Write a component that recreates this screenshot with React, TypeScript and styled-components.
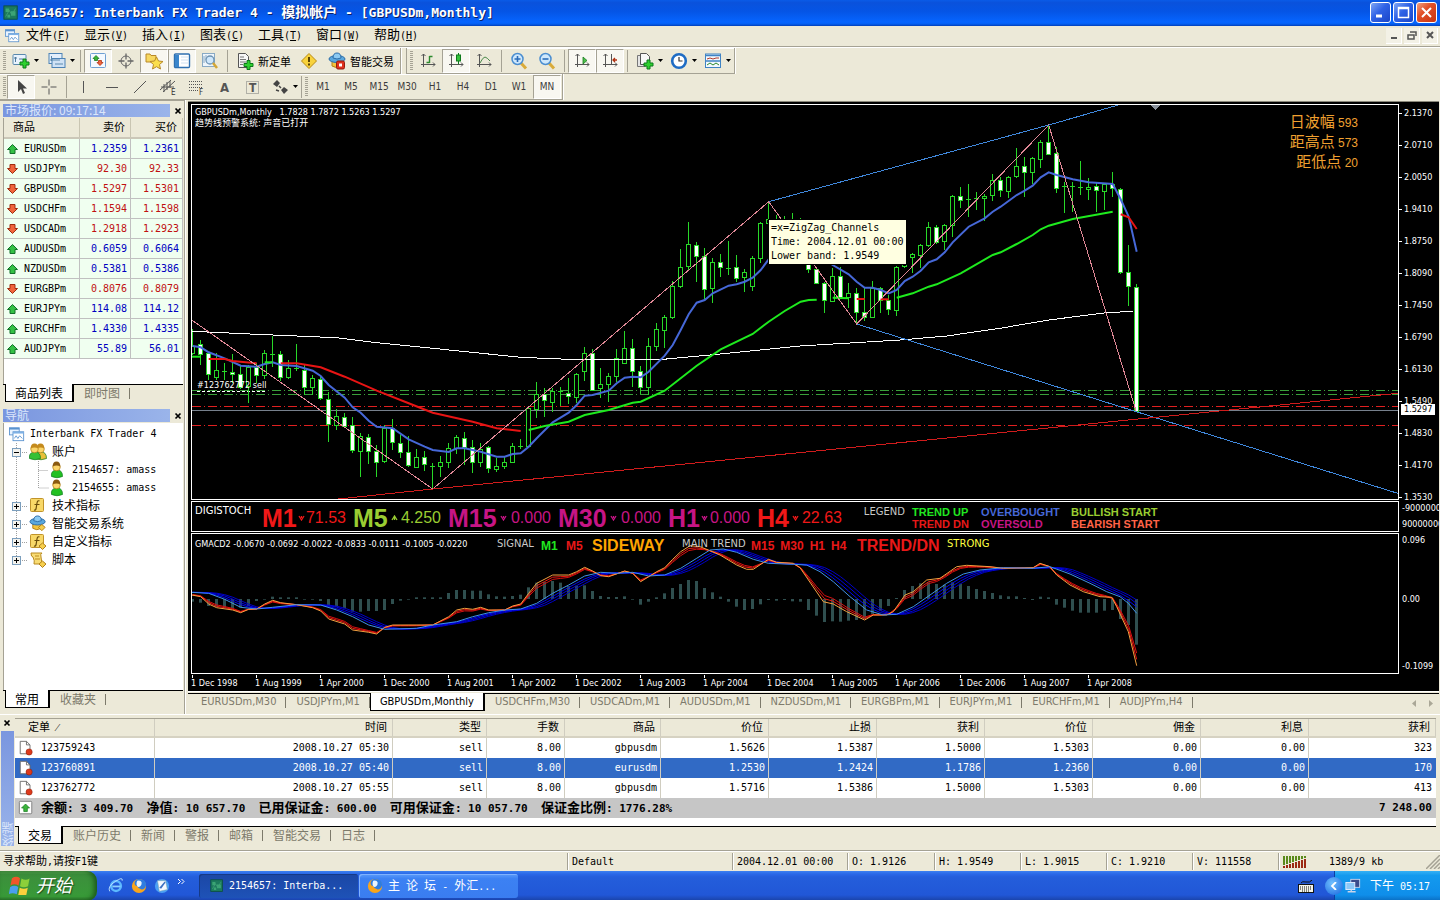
import React from "react";
import styled, { createGlobalStyle, css } from "styled-components";

const FACE = "#ece9d8";
const CJK = '"Noto Sans CJK SC"';
const MONO = `"DejaVu Sans Mono", ${CJK}, monospace`;
const UI = `"DejaVu Sans Condensed", ${CJK}, sans-serif`;
const WIDE = `"DejaVu Sans", ${CJK}, sans-serif`;
const ARIAL = '"Liberation Sans", Arial, sans-serif';

const GlobalStyle = createGlobalStyle`
  *, *::before, *::after { box-sizing: border-box; }
  body { margin: 0; background: ${FACE}; color: #000; font: 10px/14px ${MONO}; }
  button, input { font: inherit; color: inherit; }
  button { border: 0; padding: 0; margin: 0; background: none; text-align: left; white-space: nowrap; }
  ul { list-style: none; margin: 0; padding: 0; }
  svg { display: block; flex: none; }
`;

/* ---------- mixed Latin / Chinese text ---------- */

const Han = styled.span<{ $size: number }>`
  font-family: ${CJK}, sans-serif;
  font-size: ${(p) => p.$size}px;
  line-height: 1;
`;

const Mixed = ({ text, size = 12 }: { text: string; size?: number }) => (
  <>
    {text.split(/([\u4e00-\u9fff]+)/).map((part, i) =>
      i % 2 ? <Han key={i} $size={size}>{part}</Han> : part
    )}
  </>
);

/* ---------- frame ---------- */

const Desktop = styled.div`
  min-height: 100vh;
  display: flex;
  flex-direction: column;
`;

const TitleBar = styled.header`
  height: 26px;
  display: flex;
  align-items: center;
  gap: 4px;
  padding: 0 3px 1px 3px;
  background: linear-gradient(#0a5be8 0, #0a52dc 10%, #0555e6 45%, #0665ff 85%, #0560f2 92%, #023fb8 100%);
`;

const TitleText = styled.h1`
  flex: 1;
  margin: 0;
  font: bold 13px/20px ${MONO};
  color: #fff;
  text-shadow: 1px 1px #0a1f66;
  white-space: pre;
`;

const CaptionButtons = styled.div`
  display: flex;
  gap: 2px;
`;

const CaptionButton = styled.button<{ $close?: boolean }>`
  width: 21px;
  height: 21px;
  display: grid;
  place-items: center;
  border: 1px solid #fff;
  border-radius: 3px;
  background: ${(p) =>
    p.$close
      ? "linear-gradient(135deg, #f0a080, #e25028 40%, #c83410)"
      : "linear-gradient(135deg, #7fa6f5, #2f62e6 45%, #1a45c8)"};
`;

const MenuBar = styled.nav`
  height: 22px;
  display: flex;
  align-items: center;
  padding: 0 2px 2px 5px;
  border-bottom: 1px solid #fff;
  box-shadow: inset 0 -1px #a5a294;
`;

const MenuItems = styled.div`
  flex: 1;
  display: flex;
  padding-left: 6px;
`;

const MenuItem = styled.button`
  width: 58px;
  line-height: 18px;
  u { text-underline-offset: 1px; }
`;

const MdiButton = styled.button`
  width: 16px;
  height: 16px;
  margin-left: 2px;
  display: grid;
  place-items: center;
  background: #f3f1e6;
  border-right: 1px solid #fff;
  border-bottom: 1px solid #fff;
`;

/* ---------- toolbars ---------- */

const ToolRow = styled.div`
  display: flex;
  height: 26px;
`;

const ToolBand = styled.div`
  display: flex;
  align-items: center;
  height: 26px;
  padding: 0 1px 0 3px;
  border-right: 1px solid #a5a294;
  border-bottom: 1px solid #a5a294;
  box-shadow: inset 0 1px #fff, 1px 0 #fff;
  margin-right: 5px;
  & + & { border-left: 1px solid #a5a294; }
`;

const Grip = styled.span`
  width: 3px;
  height: 19px;
  margin-right: 1px;
  background: repeating-linear-gradient(#a5a294 0 1px, ${FACE} 1px 2px);
`;

const ToolButton = styled.button<{ $width?: number; $pressed?: boolean }>`
  width: ${(p) => p.$width ?? 28}px;
  height: 24px;
  display: flex;
  align-items: center;
  justify-content: ${(p) => (p.$width ? "flex-start" : "center")};
  gap: 4px;
  padding-left: ${(p) => (p.$width ? 5 : 0)}px;
  font-family: ${UI};
  color: #3c3c3c;
  ${(p) =>
    p.$pressed &&
    css`
      background: #f8f7f1;
      border: 1px solid #a5a294;
      border-right-color: #fff;
      border-bottom-color: #fff;
    `}
`;

const ToolSep = styled.span`
  width: 1px;
  height: 22px;
  margin: 0 3px;
  background: #a5a294;
`;

const ToolLabel = styled.span`
  font: 11px/14px ${CJK}, sans-serif;
  color: #000;
`;

const Caret = () => (
  <svg width="5" height="3"><path d="M0 0h5L2.500 3z" fill="#000" /></svg>
);

/* ---------- work area ---------- */

const Work = styled.main`
  flex: 1;
  display: flex;
  min-height: 0;
`;

const Side = styled.aside`
  width: 185px;
  margin-right: 3px;
  padding: 3px 1px 6px 3px;
  display: flex;
  flex-direction: column;
  border-top: 1px solid #a5a294;
  border-right: 1px solid #a5a294;
  box-shadow: 1px 0 #fff;
`;

const SidePanel = styled.section<{ $grow?: boolean }>`
  display: flex;
  flex-direction: column;
  ${(p) => p.$grow && "flex: 1;"}
  & + & { margin-top: 7px; }
`;

const PanelCaption = styled.h2`
  height: 13px;
  margin: 0 0 1px;
  display: flex;
  align-items: center;
  justify-content: space-between;
  font: 12px/13px ${CJK}, sans-serif;
  color: #dbe6fb;
`;

const PanelTitle = styled.span`
  width: 167px;
  height: 13px;
  padding-left: 2px;
  line-height: 11px;
  background: linear-gradient(90deg, #7a96df, #9ab4ea);
`;

const CloseX = styled.button`
  width: 8px;
  height: 8px;
  margin-right: 1px;
`;

const PanelBody = styled.div<{ $height?: number }>`
  background: #fff;
  border-left: 1px solid #a5a294;
  ${(p) => (p.$height ? `height: ${p.$height}px;` : "flex: 1; padding-top: 2px;")}
`;

const Quotes = styled.table`
  width: 100%;
  border-collapse: separate;
  border-spacing: 0;
  table-layout: fixed;
  th, td { height: 20px; padding: 0 3px; font-weight: normal; text-align: right; line-height: 14px; }
  th { height: 21px; padding-right: 6px; background: ${FACE}; border-bottom: 2px solid #cbc7b8; box-shadow: inset -1px 0 #c9c5b2; font-size: 11px; }
  td { background: #f0fff0; border-bottom: 1px solid #c0c0c0; border-right: 1px solid #c0c0c0; }
  th:first-child { text-align: left; padding-left: 9px; }
  td:first-child { text-align: left; }
`;

const Price = styled.td<{ $up: boolean }>`
  color: ${(p) => (p.$up ? "#0000c0" : "#c01010")};
`;

const Symbol = styled.span`
  display: flex;
  align-items: center;
  gap: 5px;
`;

const Tabs = styled.div<{ $inset?: number }>`
  display: flex;
  height: 18px;
  padding-left: ${(p) => p.$inset ?? 2}px;
  border-top: 1px solid #000;
`;

const Tab = styled.button<{ $active?: boolean; $latin?: boolean }>`
  height: 18px;
  margin-top: -1px;
  padding: 0 10px;
  font: ${(p) => (p.$latin ? `11px/18px ${UI}` : `12px/18px ${CJK}, sans-serif`)};
  color: #7d7a6b;
  background: linear-gradient(#7d7a6b, #7d7a6b) right 0 center / 1px 11px no-repeat;
  ${(p) =>
    p.$active &&
    css`
      padding: 0 9px;
      color: #000;
      background: #fff;
      border: 1px solid #000;
      border-top: 0;
      border-right-width: 2px;
    `}
`;

const TreeRow = styled.li`
  display: flex;
  align-items: center;
  height: 18px;
  white-space: pre;
`;

const TreeText = styled.span`
  padding-left: 5px;
`;

/* ---------- chart window ---------- */

const ChartColumn = styled.section`
  flex: 1;
  min-width: 0;
  display: flex;
  flex-direction: column;
  margin: 1px 1px 0 0;
  border-top: 1px solid #8a887a;
`;

const ChartWindow = styled.div`
  flex: 1;
  display: flex;
  flex-direction: column;
  gap: 1px;
  padding: 2px 0 0 3px;
  background: #000;
  color: #fff;
  font-family: ${UI};
  font-size: 9px;
  border-bottom: 1px solid #fff;
  overflow: hidden;
`;

const PaneRow = styled.div<{ $height?: number }>`
  display: grid;
  grid-template-columns: minmax(0, 1fr) 40px;
  ${(p) => (p.$height ? `height: ${p.$height}px;` : "flex: 1;")}
`;

const Pane = styled.div`
  position: relative;
  border: 1px solid #fff;
  overflow: hidden;
`;

const Plot = styled.svg`
  position: absolute;
  inset: 0;
  width: 100%;
  height: 100%;
`;

const Axis = styled.div<{ $rows?: string }>`
  position: relative;
  display: grid;
  grid-template-rows: ${(p) => p.$rows ?? "none"};
  align-content: start;
`;

const AxisLabel = styled.span`
  line-height: 14px;
  padding-left: 3px;
`;

const PriceLabel = styled(AxisLabel)`
  line-height: 18px;
  padding-left: 5px;
  background: linear-gradient(#fff, #fff) 0 9px / 3px 1px no-repeat;
`;

const PriceTag = styled.span`
  position: absolute;
  left: 2px;
  top: 300px;
  width: 34px;
  padding-left: 3px;
  background: #fff;
  color: #000;
  line-height: 11px;
`;

const PaneHeading = styled.div`
  position: relative;
  padding: 2px 3px;
  line-height: 11px;
  white-space: pre;
`;

const Ranges = styled.div`
  position: absolute;
  right: 40px;
  top: 8px;
  text-align: right;
  font: 12px/20px ${ARIAL};
  color: #f0a030;
`;

const Tooltip = styled.div`
  position: absolute;
  left: 576px;
  top: 114px;
  padding: 1px 3px 1px 2px;
  background: #ffffe1;
  border: 1px solid #000;
  color: #000;
  font: 10px/14px ${MONO};
  white-space: pre;
`;

const Readout = styled.div`
  position: relative;
  display: flex;
  gap: 7px;
  padding: 3px 3px;
  height: 29px;
  white-space: pre;
`;

const Small = styled.span<{ $width?: number; $color?: string; $end?: boolean; $narrow?: boolean }>`
  flex: none;
  line-height: ${(p) => (p.$end || p.$narrow || p.$color ? 14 : 12)}px;
  font-family: ${(p) => (p.$narrow ? UI : WIDE)};
  font-size: ${(p) => (p.$narrow ? 9 : 10)}px;
  color: ${(p) => p.$color ?? "#fff"};
  ${(p) => p.$width && `width: ${p.$width}px;`}
  ${(p) => p.$end && "text-align: right;"}
`;

const Gauge = styled.span<{ $width: number; $color: string }>`
  flex: none;
  width: ${(p) => p.$width}px;
  height: 26px;
  display: flex;
  align-items: center;
  justify-content: space-between;
  font: 16px/26px ${ARIAL};
  color: ${(p) => p.$color};
  b { font-size: 25px; }
`;

const Legend = styled.div`
  display: grid;
  grid-template-columns: 62px 83px auto;
  grid-auto-rows: 12px;
  column-gap: 7px;
  font: bold 11px/14px ${ARIAL};
`;

const LegendItem = styled.span<{ $color: string }>`
  color: ${(p) => p.$color};
`;

const Tint = styled.span<{ $color: string; $size?: number; $width: number }>`
  flex: none;
  width: ${(p) => p.$width}px;
  display: flex;
  gap: 6px;
  color: ${(p) => p.$color};
  font: bold ${(p) => p.$size ?? 12}px/18px ${ARIAL};
`;

const DateAxis = styled.div`
  display: flex;
  height: 16px;
  overflow: hidden;
`;

const DateLabel = styled.span`
  flex: none;
  width: 64px;
  line-height: 16px;
  background: linear-gradient(#fff, #fff) 1px 0 / 1px 3px no-repeat;
  white-space: nowrap;
`;

const ChartTabs = styled.div`
  display: flex;
  align-items: center;
  justify-content: space-between;
  height: 21px;
  padding-bottom: 2px;
  margin-top: 1px;
  border-top: 1px solid #000;
  & > ${Tabs} { flex: 1; padding-left: 3px; border-top: 0; }
`;

const Scrollers = styled.span`
  display: flex;
  gap: 13px;
  margin-right: 6px;
`;

/* ---------- terminal ---------- */

const Terminal = styled.section`
  display: flex;
  height: 136px;
  border-top: 1px solid #fff;
  padding: 3px 4px 0 1px;
`;

const Strip = styled.div`
  width: 14px;
  padding: 1px 1px 0 0;
  display: flex;
  flex-direction: column;
  align-items: center;
  gap: 4px;
`;

const StripTitle = styled.h2`
  width: 13px;
  flex: none;
  height: 115px;
  margin: 0;
  writing-mode: vertical-rl;
  transform: rotate(180deg);
  font: 12px/13px ${CJK}, sans-serif;
  color: #dbe6fb;
  background: linear-gradient(#9ab4ea, #7a96df);
`;

const TerminalBody = styled.div`
  flex: 1;
  min-width: 0;
`;

const TradeSheet = styled.div`
  background: #fff;
  border-top: 1px solid #a5a294;
  height: 108px;
`;

const Trades = styled.table`
  width: 100%;
  table-layout: fixed;
  border-collapse: separate;
  border-spacing: 0;
  th, td { height: 20px; padding: 0 3px; text-align: right; line-height: 14px; border-right: 1px solid #d0cdc0; }
  th { height: 19px; font-weight: normal; background: ${FACE}; border-bottom: 2px solid #d6d2c2; padding-right: 5px; font-size: 11px; }
  th:first-child { text-align: left; padding-left: 13px; }
  td:first-child { text-align: left; }
  td:last-child { border-right: 0; padding-right: 4px; }
`;

const TradeLine = styled.tr<{ $selected?: boolean }>`
  ${(p) => p.$selected && "background: #316ac5; color: #fff;"}
`;

const Summary = styled.tr`
  background: #c6c6c6;
  font-size: 11px;
  font-weight: bold;
  white-space: pre;
`;

const SummaryCell = styled.td`
  && { border-right: 0; }
`;

const IconText = styled.span`
  display: flex;
  align-items: center;
  gap: 7px;
`;

/* ---------- status bar & taskbar ---------- */

const StatusBar = styled.footer`
  display: flex;
  height: 21px;
  padding: 2px 0 1px;
  border-top: 1px solid #a5a294;
  box-shadow: inset 0 1px #fff;
`;

const StatusCell = styled.span<{ $width?: number }>`
  ${(p) => (p.$width ? `width: ${p.$width}px; padding-left: 4px;` : "flex: 1; padding-left: 3px;")}
  line-height: 18px;
  display: flex;
  align-items: center;
  & + & { border-left: 1px solid #a5a294; box-shadow: inset 1px 0 #fff; }
`;

const TrafficText = styled.span`
  flex: 1;
  padding-left: 22px;
`;

const TaskBar = styled.footer`
  display: flex;
  align-items: center;
  height: 30px;
  background: linear-gradient(#3c81f0 0, #2a68e8 10%, #245edb 20%, #2157d7 80%, #1941a5 100%);
  color: #fff;
`;

const StartButton = styled.button`
  width: 97px;
  height: 30px;
  display: flex;
  align-items: center;
  gap: 5px;
  padding: 0 0 4px 9px;
  border-radius: 0 10px 10px 0;
  background: linear-gradient(#5eac56 0, #3c8f3c 12%, #3a943a 50%, #389a38 85%, #2a6e2a 100%);
  box-shadow: inset -3px 0 5px #1c5a1c;
  font: italic 18px/26px ${CJK}, sans-serif;
  text-shadow: 1px 1px 1px #1d4d1d;
`;

const QuickLaunch = styled.div`
  width: 102px;
  display: flex;
  align-items: center;
  gap: 7px;
  padding-left: 11px;
`;

const TaskButton = styled.button<{ $active?: boolean }>`
  width: 159px;
  height: 24px;
  margin-right: 1px;
  display: flex;
  align-items: center;
  gap: 5px;
  padding-left: ${(p) => (p.$active ? 11 : 8)}px;
  border-radius: 3px;
  background: ${(p) => (p.$active ? "linear-gradient(#1b47a5, #1e52b7)" : "linear-gradient(#5a9bfa, #3c81f3 20%, #3a7df0)")};
  box-shadow: inset 1px 1px ${(p) => (p.$active ? "#163a86" : "#7fb2ff")};
`;

const TrayLead = styled.span`
  margin-left: auto;
  width: 36px;
`;

const Tray = styled.div`
  width: 106px;
  height: 30px;
  display: flex;
  align-items: center;
  gap: 2px;
  background: linear-gradient(#35b1f5 0, #139aee 15%, #0f8eea 80%, #0a6cc0 100%);
  border-left: 1px solid #0c3fa0;
`;

const Clock = styled.time`
  padding-left: 7px;
`;

const TrayToggle = styled.button`
  width: 18px;
  height: 18px;
  margin-left: -10px;
  display: grid;
  place-items: center;
  border-radius: 9px;
  background: radial-gradient(circle at 40% 35%, #6fc0ff, #1763dd);
`;

/* ---------- icons ---------- */

const Plus = ({ x, y }: { x: number; y: number }) => (
  <path
    transform={`translate(${x} ${y})`}
    d="M3.500 .5h3v3h3v3h-3v3h-3v-3h-3v-3h3z"
    fill="#2fd02f"
    stroke="#0b7a1b"
  />
);

const axes = <path d="M4.500 2v13M2 12.500h14M2.500 4l2-2 2 2M14 10.500l2 2-2 2" fill="none" stroke="#555" />;

const ufo = (
  <g>
    <path d="M4 8v6q4 3 9 0V8z" fill="#f3c33c" stroke="#b4821a" />
    <ellipse cx="9" cy="7" rx="8" ry="3.500" fill="#5aa7dd" stroke="#2b6ca8" />
    <path d="M5 6q0-5 4-5t4 5q-4 2-8 0z" fill="#8ccaf2" stroke="#2b6ca8" />
  </g>
);

const goldBox = (
  <g>
    <rect x="1.500" y="1.500" width="13" height="13" rx="1" fill="#f8d868" stroke="#c0932a" />
    <path d="M10.500 4q-2-1-2.500 2l-1 6q-.5 1.500-2 1M5.500 7.500h5" fill="none" stroke="#6b4d0a" strokeWidth="1.200" />
  </g>
);

const goldGem = <path d="M13.500 10l3.500 3-3.500 3.500-3.500-3.500z" fill="#f6cf4e" stroke="#b4821a" />;

const person = (x: number, hair: string, body: string) => (
  <g transform={`translate(${x} 1)`}>
    <path d="M.5 14.500q-1-6 5-6.500t6 6.500q-5.500 2.500-11 0z" fill={body} stroke="#0c7a1b" strokeWidth=".7" />
    <circle cx="5.500" cy="5" r="3.800" fill="#fbd56a" stroke="#b07c12" strokeWidth=".7" />
    <path d="M1.700 4.500q0-5 3.800-5t3.800 5q-3.800-2-7.600 0z" fill={hair} />
  </g>
);

const ICONS: Record<string, React.ReactNode> = {
  app: (
    <>
      <rect x="1" y="1" width="15" height="15" fill="#1c7a5c" stroke="#0b4f3e" />
      <path d="M3 4h4v4H3zM9 7h5v5H9zM5 11h3v3H5z" fill="#3aa574" />
      <path d="M3 13l4-7 3 5 4-7" fill="none" stroke="#3f9f78" />
    </>
  ),
  charts: (
    <>
      <rect x=".5" y="2" width="11" height="8" fill="#e8f3ff" stroke="#5a93cf" />
      <path d="M.5 3h11" stroke="#5a93cf" strokeWidth="2" />
      <rect x="4.500" y="6.500" width="12" height="10" fill="#fff" stroke="#5a93cf" />
      <path d="M4.500 7.500h12" stroke="#7eb1e5" strokeWidth="2" />
      <path d="M6 14l2-3 2 3 2-3 3 3" fill="none" stroke="#5a93cf" />
    </>
  ),
  newChart: (
    <>
      <rect x="1" y="2.500" width="13" height="10" rx="1" fill="#e9f3fd" stroke="#5a89ad" />
      <path d="M3.500 5v5M2 6h3M7 7h4" stroke="#4f7a9c" />
      <Plus x={7.500} y={6.500} />
    </>
  ),
  profiles: (
    <>
      <rect x="1" y="1.500" width="13" height="10" fill="#e3effb" stroke="#4d83b5" />
      <rect x="4" y="6.500" width="13" height="9" fill="#cfe2f5" stroke="#4d83b5" />
      <path d="M3.500 4v5M2 8h10M7 12h8" stroke="#5a89ad" />
    </>
  ),
  market: (
    <>
      <rect x="1.500" y="1.500" width="15" height="14" rx="1" fill="#f4f9ff" stroke="#6fa0d3" />
      <path d="M7 3.500l3 3H8.500v2h-3v-2H4z" fill="#35b435" stroke="#1a7a1f" strokeWidth=".8" />
      <path d="M11 13.500l3-3h-1.500v-2h-3v2H8z" fill="#f0643c" stroke="#b03010" strokeWidth=".8" />
    </>
  ),
  target: (
    <g fill="none" stroke="#666">
      <circle cx="9" cy="9" r="5" />
      <path d="M9 1.500v6M9 10.500v6M1.500 9h6M10.500 9h6" strokeWidth="1.300" />
    </g>
  ),
  favorites: (
    <>
      <path d="M1 2h4l1 1.500h5V10H1z" fill="#f7d860" stroke="#b8892a" />
      <path d="M11.500 5l2 4 4.500.5-3.500 3 1 4.500-4-2.300-4 2.300 1-4.500-3.500-3 4.500-.5z" fill="#fbdf4c" stroke="#b8892a" />
    </>
  ),
  terminal: (
    <>
      <rect x="1.500" y="2" width="15" height="13.500" rx="1" fill="#fff" stroke="#2f70b0" strokeWidth="1.400" />
      <path d="M2 3h4v12H2z" fill="#3a86cc" />
      <path d="M8 5h7M8 8h7M8 11h7" stroke="#cfe0f0" />
    </>
  ),
  tester: (
    <>
      <rect x="1.500" y="1.500" width="12" height="13" fill="#eef5fb" stroke="#88a9c4" />
      <path d="M3 4v7M5 3v5" stroke="#88a9c4" />
      <circle cx="9" cy="8" r="4" fill="#cfe7fb" stroke="#6d93b3" strokeWidth="1.300" />
      <path d="M12 11l4 5" stroke="#d4a634" strokeWidth="2.500" />
    </>
  ),
  newOrder: (
    <>
      <path d="M2.500 1.500h7l3 3v11h-10z" fill="#f6f6f6" stroke="#555" />
      <path d="M4 5h4M4 7.500h6M4 10h6M4 12.500h3" stroke="#777" />
      <Plus x={7.500} y={8} />
    </>
  ),
  metaEditor: (
    <>
      <path d="M9 1.500l7.500 7.500L9 16.500 1.500 9z" fill="#f8d23c" stroke="#b98a14" />
      <path d="M9 5v5M9 11.500v2" stroke="#5a4304" strokeWidth="2" />
    </>
  ),
  experts: (
    <>
      {ufo}
      <rect x="8.500" y="9" width="8" height="8" rx="1.500" fill="#e0301c" stroke="#941a0c" />
      <path d="M11 11.500h3v3h-3z" fill="#fff" />
    </>
  ),
  bars: (
    <>
      {axes}
      <path d="M10.500 4v7M10.500 4.500h3M7.500 10.500h3" stroke="#2c8a2c" strokeWidth="1.400" fill="none" />
    </>
  ),
  candles: (
    <>
      {axes}
      <path d="M11.500 1v11" stroke="#0e7a1c" />
      <rect x="9.500" y="3" width="4" height="6" fill="#34c23c" stroke="#0e7a1c" />
    </>
  ),
  line: (
    <>
      {axes}
      <path d="M5 11q3-6 5-6 2 .5 5 4" fill="none" stroke="#4b8a4b" />
    </>
  ),
  zoomIn: (
    <>
      <path d="M11 11l5 5.500" stroke="#d9ab3a" strokeWidth="3" />
      <circle cx="7.500" cy="7" r="5.500" fill="#cfe8fc" stroke="#4b8ed0" strokeWidth="1.500" />
      <path d="M7.500 4v6M4.500 7h6" stroke="#2b6cb8" strokeWidth="1.600" />
    </>
  ),
  zoomOut: (
    <>
      <path d="M11 11l5 5.500" stroke="#d9ab3a" strokeWidth="3" />
      <circle cx="7.500" cy="7" r="5.500" fill="#cfe8fc" stroke="#4b8ed0" strokeWidth="1.500" />
      <path d="M4.500 7h6" stroke="#2b6cb8" strokeWidth="1.600" />
    </>
  ),
  autoScroll: (
    <>
      {axes}
      <path d="M10 5l4 3.500-4 3.500z" fill="#4cc04c" stroke="#1a7a1f" strokeWidth=".8" />
    </>
  ),
  shift: (
    <>
      {axes}
      <path d="M10.500 2v10" stroke="#555" />
      <path d="M16 8h-4M14 6l-2 2 2 2" stroke="#b03010" fill="none" strokeWidth="1.300" />
    </>
  ),
  indicators: (
    <>
      <path d="M1.500 3.500h8v11h-8z" fill="#e4e4e4" stroke="#777" />
      <path d="M4.500 1.500h6l3 3v8h-9z" fill="#f8f8f8" stroke="#555" />
      <Plus x={7.500} y={7.500} />
    </>
  ),
  periods: (
    <>
      <circle cx="9" cy="9" r="6.800" fill="#fff" stroke="#1e6cc4" strokeWidth="2.600" />
      <path d="M9 5v4h3.500" fill="none" stroke="#333" strokeWidth="1.200" />
    </>
  ),
  templates: (
    <>
      <rect x="1.500" y="2" width="15" height="13.500" fill="#f2f8fe" stroke="#3f83c4" />
      <path d="M2 3.500h14M2 9h14" stroke="#3f83c4" strokeWidth="1.600" />
      <path d="M3 7l3-1 3 1 3-1 3 0" stroke="#b03a2a" fill="none" />
      <path d="M3 13l3-2 3 2 3-2 3 2" stroke="#2c8a2c" fill="none" />
    </>
  ),
  cursor: <path d="M6 2v12l3-3 2 5 2-1-2-4.500h4z" fill="#444" />,
  cross: <path d="M9 1.500v6M9 10.500v6M1.500 9h6M10.500 9h6" stroke="#555" />,
  vline: <path d="M8.500 3v12" stroke="#555" />,
  hline: <path d="M3 9.500h12" stroke="#555" />,
  trend: <path d="M3 15L15 3" stroke="#555" />,
  channel: <path d="M1 12L12 2M4 14L16 3M5 6v8M8 4v8M11 3v7M2 9h13" stroke="#555" fill="none" />,
  fibo: <path d="M2 3.500h14M2 6.500h14M2 9.500h14M2 12.500h9" stroke="#555" strokeDasharray="1 1" />,
  label: <rect x="3.500" y="3.500" width="12" height="12" fill="none" stroke="#777" strokeDasharray="1 1" />,
  arrows: (
    <>
      <path d="M2 6l4-4 3 3-3 4zM10 12l3-3 4 3-4 4z" fill="#444" />
      <path d="M8 8l2 2M5 12l3 1" stroke="#444" strokeWidth="1.500" />
    </>
  ),
  accounts: <>{person(6, "#c48a1c", "#e8bf3a")}{person(0, "#c48a1c", "#35c035")}</>,
  user: person(2, "#8a5a10", "#22c022"),
  formula: goldBox,
  custom: <>{goldBox}{goldGem}</>,
  advisor: <g transform="scale(.95)">{ufo}{goldGem}</g>,
  script: (
    <>
      <path d="M2 2h11q-2 1-1 4l1 7H5q1-3-1-7-2 0-2-4z" fill="#f8dc74" stroke="#b98a1e" />
      <path d="M6 5h4M6 8h5" stroke="#b98a1e" />
      {goldGem}
    </>
  ),
  order: (
    <>
      <path d="M2.500 1.500h7l4 4v10h-11z" fill="#fff" stroke="#666" />
      <path d="M9.500 1.500v4h4" fill="none" stroke="#666" />
      <circle cx="12.500" cy="13.500" r="3.500" fill="#dd3a1c" stroke="#8c1a08" strokeWidth=".6" />
    </>
  ),
  balance: (
    <>
      <rect x="1.500" y="1.500" width="14" height="14" rx="1" fill="#fff" stroke="#777" />
      <path d="M8.500 4.500l4.500 4.500h-2.500v4h-4V9H4z" fill="#3cb43c" stroke="#147a1c" strokeWidth=".8" />
    </>
  ),
  ie: (
    <>
      <circle cx="9" cy="9" r="5.500" fill="none" stroke="#5cb8ff" strokeWidth="2.800" />
      <path d="M5 9.500h9" stroke="#8cd0ff" strokeWidth="2" />
      <path d="M2 15Q-1 10 8 4t8-1" fill="none" stroke="#bfe4ff" />
    </>
  ),
  browser: (
    <>
      <circle cx="9" cy="9" r="8" fill="#f9a51c" />
      <path d="M9 1q8 0 8 7-1 5-5 5-4-1-5-4-3 0-3-4 1-4 5-4z" fill="#2f7de0" />
      <path d="M7 3q4-1 5 2 0 5-4 5-3-2-1-7z" fill="#e8f4ff" />
    </>
  ),
  desktop: (
    <>
      <circle cx="9" cy="9" r="8" fill="#4a9ff5" />
      <path d="M4 3h9l2 10-9 2z" fill="#f4f8ff" stroke="#8aa" strokeWidth=".6" />
      <path d="M6 11l6-7 1 1-5 7z" fill="#3a6fc0" />
    </>
  ),
  windows: (
    <g transform="scale(1.200)">
      <path d="M2 3.500q3-2 5.500 0L6.500 8.500q-3-1.500-5.500 0z" fill="#f0562c" />
      <path d="M8.500 3.800q3 1.700 5.500 0L13 9q-3 1.500-5.500 0z" fill="#8ccf3a" />
      <path d="M.8 9.500q3-1.500 5.500 0L5.300 14.500q-3-1.500-5.500 0z" fill="#4a9ff0" />
      <path d="M7.300 10q3 1.500 5.500 0l-1 5q-3 1.500-5.500 0z" fill="#fbd03c" />
    </g>
  ),
  network: (
    <>
      <rect x="6.500" y="1.500" width="10" height="9" fill="#3a4b8c" stroke="#cdd7ee" />
      <rect x="1" y="5" width="10" height="8" fill="#8cc8f8" stroke="#e8f0ff" />
      <path d="M3 15.500h9M7 13v2" stroke="#c8d4ea" strokeWidth="1.500" />
    </>
  ),
};

const Icon = ({ name, size = 18 }: { name: string; size?: number }) => (
  <svg width={size} height={size} viewBox="0 0 18 18" aria-hidden="true">{ICONS[name]}</svg>
);

const Cross = () => (
  <svg width="8" height="8"><path d="M1.500 1.500l5 5M6.500 1.500l-5 5" stroke="#000" strokeWidth="1.700" /></svg>
);

const Chevron = ({ up }: { up?: boolean }) => (
  <svg width="7" height="6">
    <path d={up ? "M1 5l2.500-4L6 5M3.500 3v2" : "M1 1l2.500 4L6 1M3.500 1v2"} fill="none" stroke="currentColor" strokeWidth="1.300" />
  </svg>
);

const QuoteArrow = ({ up }: { up: boolean }) => (
  <svg width="12" height="10">
    {up ? (
      <path d="M5.500 .5l5 5h-2.500v4h-5v-4H.5z" fill="#34c045" stroke="#12702a" />
    ) : (
      <path d="M5.500 9.500l5-5h-2.500v-4h-5v4H.5z" fill="#f0643c" stroke="#a02c10" />
    )}
  </svg>
);

/* ---------- chart data ---------- */

type Point = [number, number];

// One row for each month: high, body top, body bottom, low, 1 when the month closed lower.
// Levels count down from the top of the window in thirds of a pixel.
const CANDLES: [number, number, number, number, number][] = [
  [688,738,758,765,0],[720,733,763,795,1],[755,760,822,840,1],[758,810,830,840,0],[790,812,812,840,0],
  [762,815,822,848,1],[795,822,860,868,1],[795,800,858,908,0],[790,800,825,850,1],[750,760,825,838,0],
  [708,762,765,800,0],[752,763,832,842,1],[780,805,832,838,0],[732,805,805,812,0],[795,810,862,885,1],
  [825,835,862,885,0],[830,838,895,900,1],[875,898,972,1025,1],[928,948,975,990,0],[940,950,977,985,1],
  [952,975,1050,1060,1],[1000,1008,1052,1130,0],[1002,1010,1052,1092,1],[1035,1052,1085,1130,1],[975,985,1085,1088,0],
  [957,985,1028,1050,1],[1005,1028,1055,1075,1],[1008,1057,1095,1100,1],[1047,1072,1103,1105,0],[1053,1072,1093,1112,1],
  [1088,1097,1097,1165,0],[1068,1085,1098,1132,0],[1030,1043,1085,1105,0],[1005,1012,1045,1062,0],[997,1015,1042,1095,1],
  [1020,1042,1088,1118,1],[1030,1048,1088,1100,0],[1038,1042,1105,1118,1],[1075,1097,1105,1115,0],[1070,1085,1097,1108,0],
  [1028,1037,1085,1087,0],[1018,1038,1040,1048,0],[920,925,1038,1045,0],[847,883,928,955,0],[865,883,902,952,1],
  [865,873,905,935,0],[862,873,877,918,0],[833,880,888,912,1],[818,823,892,910,0],[742,760,815,842,0],
  [748,760,870,873,1],[805,853,865,895,0],[820,828,853,905,0],[748,775,830,845,0],[692,745,790,793,0],
  [718,745,815,862,1],[798,813,860,882,1],[715,738,860,885,0],[670,688,740,752,0],[645,650,688,745,0],
  [542,558,650,658,0],[448,500,558,565,0],[366,433,500,512,0],[425,435,467,547,1],[445,467,565,598,1],
  [475,487,565,610,0],[462,487,503,532,1],[422,505,505,525,0],[465,500,532,545,1],[508,517,532,577,0],
  [468,475,560,572,0],[365,370,475,490,0],[305,358,370,420,0],[345,370,420,440,1],[348,380,430,450,0],
  [340,380,450,470,1],[355,400,470,480,1],[440,450,508,520,1],[500,508,550,553,1],[545,550,602,640,1],
  [505,528,602,603,0],[500,528,590,598,1],[550,580,592,625,0],[565,580,637,672,1],[560,637,653,662,1],
  [543,565,653,655,0],[562,565,600,640,1],[585,600,628,645,1],[498,500,628,647,0],[485,490,500,505,0],
  [460,463,472,520,0],[432,436,466,505,0],[367,382,437,442,0],[376,382,428,433,1],[373,376,425,450,0],
  [285,289,376,412,0],[262,289,302,325,1],[252,296,296,350,0],[277,295,295,330,0],[282,289,296,362,0],
  [223,241,287,302,0],[232,241,272,290,1],[228,230,272,295,0],[145,199,230,233,0],[172,198,217,292,1],
  [172,175,217,252,0],[120,125,176,205,0],[75,125,160,162,1],[140,160,265,278,1],[245,257,257,338,0],
  [245,257,257,335,0],[182,262,264,285,0],[235,260,266,300,0],[250,258,270,335,1],[250,253,275,330,0],
  [217,252,265,292,1],[265,268,518,523,1],[435,517,560,617,1],[552,560,932,935,1],
];

const FAST: Point[] = [
  [8,738],[32,742],[56,757],[104,775],[152,797],[200,800],[224,792],[248,787],[272,795],[320,798],[368,812],[392,828],
  [416,855],[464,893],[488,922],[512,938],[536,962],[560,980],[608,985],[656,1018],[704,1040],[728,1050],[776,1056],
  [800,1045],[824,1045],[872,1055],[920,1070],[944,1070],[968,1062],[992,1060],[1016,1040],[1040,1015],[1088,967],
  [1136,938],[1160,915],[1184,887],[1208,885],[1256,872],[1280,850],[1304,833],[1328,830],[1352,832],[1376,815],
  [1424,767],[1448,735],[1472,690],[1496,643],[1520,608],[1544,600],[1568,580],[1616,557],[1640,553],[1664,545],
  [1688,533],[1712,510],[1736,478],[1784,450],[1856,455],[1904,480],[1928,495],[1976,523],[2000,545],[2024,563],
  [2048,563],[2072,570],[2096,580],[2120,570],[2144,543],[2168,530],[2192,512],[2216,487],[2240,478],[2264,457],
  [2288,427],[2336,380],[2384,355],[2408,335],[2432,320],[2480,285],[2504,272],[2528,257],[2552,232],[2576,217],
  [2600,225],[2648,238],[2696,247],[2768,252],[2792,298],[2816,350],[2840,455],
];

const SLOW_UP: Point[][] = [
  [[5,770],[32,770]],
  [[224,787],[248,787]],
  [[1016,990],[1064,978],[1136,965],[1184,945],[1256,930],[1328,908],[1352,905],[1424,872],[1520,797],[1592,748],
   [1688,702],[1736,665],[1784,633],[1832,605],[1856,600],[1880,599]],
  [[1928,593],[1976,595]],
  [[2120,593],[2168,580],[2216,560],[2240,553],[2312,520],[2408,465],[2432,457],[2480,432],[2528,405],[2552,388],
   [2576,377],[2648,357],[2768,335]],
];

const SLOW_DOWN: Point[][] = [
  [[56,777],[104,777],[128,783],[200,790]],
  [[272,790],[320,790],[392,802],[464,830],[560,872],[656,910],[728,938],[848,965],[920,985],[992,993]],
  [[2000,597],[2024,597]],
  [[2072,598],[2096,598]],
  [[2792,343],[2816,352],[2840,387]],
];

const LONG: Point[] = [
  [5,694],[200,703],[440,713],[560,728],[728,745],[992,772],[1160,779],[1420,778],[1560,765],[1830,738],[2130,720],
  [2270,708],[2430,685],[2576,660],[2750,638],[2830,634],
];

const ZIGZAG: Point[] = [[5,660],[728,1167],[1736,305],[2000,672],[2576,75],[2839,935]];
const UPPER: Point[] = [[1736,305],[2576,75],[2785,15]];
const LOWER: Point[] = [[2000,672],[2839,935],[3623,1180]];
const TREND: Point[] = [[445,1197],[728,1167],[3623,880]];

const HISTOGRAM = [
  305,308,318,320,323,325,323,318,303,299,290,292,292,292,299,299,303,318,320,325,335,335,333,333,330,312,302,299,292,
  292,292,292,279,270,270,272,272,283,289,290,288,284,262,248,246,243,248,258,257,256,273,288,291,291,289,299,314,305,
  292,280,264,252,240,243,264,277,290,305,320,330,327,313,300,302,300,304,305,330,347,366,364,365,362,360,357,342,332,
  318,294,270,258,250,247,252,254,247,251,258,267,273,279,286,289,289,294,300,290,292,314,323,332,338,338,338,332,330,
  357,375,434,
];

const LEAD: Point[] = [
  [5,285],[32,290],[56,312],[80,323],[128,330],[152,338],[176,328],[200,327],[224,312],[248,301],[272,308],[320,314],
  [368,323],[392,333],[416,357],[464,372],[488,390],[536,397],[560,402],[584,382],[608,375],[728,375],[776,350],
  [800,330],[824,325],[848,328],[872,322],[896,330],[944,330],[968,318],[992,312],[1016,280],[1040,250],[1088,225],
  [1136,225],[1160,215],[1184,202],[1208,213],[1232,227],[1256,230],[1304,213],[1328,220],[1352,245],[1400,215],
  [1424,203],[1448,178],[1472,155],[1500,137],[1530,140],[1555,150],[1590,165],[1640,195],[1670,208],[1690,208],
  [1735,178],[1760,187],[1810,190],[1830,203],[1900,305],[1930,312],[1970,335],[2024,360],[2050,345],[2090,345],
  [2110,335],[2145,285],[2170,275],[2210,240],[2250,235],[2300,200],[2330,196],[2400,200],[2440,205],[2530,203],
  [2550,190],[2580,200],[2600,225],[2640,255],[2680,275],[2730,290],[2765,292],[2780,320],[2815,395],[2840,497],
];

const LAG: Point[] = [
  [5,277],[56,280],[104,298],[152,322],[200,327],[248,322],[320,314],[392,315],[440,330],[488,350],[536,375],[584,388],
  [680,385],[728,375],[800,365],[848,350],[896,338],[944,330],[992,327],[1040,310],[1088,280],[1136,255],[1184,228],
  [1232,217],[1280,220],[1328,217],[1376,228],[1424,225],[1472,205],[1520,175],[1560,150],[1600,147],[1640,157],
  [1690,178],[1735,190],[1810,193],[1850,195],[1890,215],[1930,245],[1980,290],[2030,330],[2080,345],[2120,343],
  [2170,320],[2220,285],[2270,250],[2320,222],[2370,210],[2440,203],[2530,205],[2580,200],[2640,222],[2700,250],
  [2750,275],[2790,290],[2815,310],[2840,340],
];

const points = (list: Point[], top: number) =>
  list.map(([x, y]) => `${(x / 3 - 2).toFixed(1)},${(y / 3 - top).toFixed(1)}`).join(" ");

const valueAt = (list: Point[], x: number) => {
  const i = list.findIndex((p) => p[0] >= x);
  if (i <= 0) return i === 0 ? list[0][1] : list[list.length - 1][1];
  const [x0, y0] = list[i - 1];
  const [x1, y1] = list[i];
  return y0 + ((y1 - y0) * (x - x0)) / (x1 - x0);
};

const MONTHS = CANDLES.map((_, i) => 8 + i * 24);
const blend = (t: number): Point[] => MONTHS.map((x) => [x, valueAt(LEAD, x) * (1 - t) + valueAt(LAG, x) * t]);
const delay = (d: number): Point[] =>
  MONTHS.map((x) => [x, (valueAt(LAG, x - d) + valueAt(LAG, x - d - 24) + valueAt(LAG, x - d + 24)) / 3]);

const Curve = ({ data, top, color, width = 1 }: { data: Point[]; top: number; color: string; width?: number }) => (
  <polyline points={points(data, top)} fill="none" stroke={color} strokeWidth={width} />
);

const LEVELS = [
  { y: 285, color: "#3aa03a", dash: "9 3 1 3" },
  { y: 289, color: "#3aa03a", dash: "9 3 1 3" },
  { y: 301, color: "#e02020", dash: "9 3 1 3" },
  { y: 320, color: "#e02020", dash: "9 3 1 3" },
  { y: 305, color: "#77808c", dash: undefined },
];

const PriceChart = () => (
  <Plot shapeRendering="crispEdges">
    {LEVELS.map((l) => (
      <line key={l.y} x1="0" x2="100%" y1={l.y + 0.5} y2={l.y + 0.5} stroke={l.color} strokeDasharray={l.dash} />
    ))}
    <path d="M959 0h9l-4.500 5z" fill="#8a929c" />
    <line x1="5" x2="74" y1="286.500" y2="286.500" stroke="#fff" strokeDasharray="3 2" />
    {CANDLES.map(([high, top, bottom, low, down], i) => {
      const x = i * 8;
      const y = Math.round(top / 3) - 5;
      const h = Math.max(Math.round((bottom - top) / 3), 0);
      return (
        <g key={i} stroke="#28d828" fill={down ? "#fff" : "#000"}>
          <line x1={x + 0.5} x2={x + 0.5} y1={high / 3 - 5} y2={low / 3 - 5} />
          {h < 2 ? (
            <line x1={x - 2} x2={x + 3} y1={y + 0.5} y2={y + 0.5} />
          ) : (
            <rect x={x - 1.5} y={y + 0.5} width="4" height={h} />
          )}
        </g>
      );
    })}
    <Curve data={LONG} top={5} color="#fff" />
    <g shapeRendering="auto">
      <Curve data={FAST} top={5} color="#4668d8" width={2} />
      {SLOW_UP.map((s, i) => <Curve key={i} data={s} top={5} color="#1eea1e" width={2} />)}
      {SLOW_DOWN.map((s, i) => <Curve key={i} data={s} top={5} color="#e81414" width={2} />)}
    </g>
    <Curve data={ZIGZAG} top={5} color="#e08896" />
    <Curve data={UPPER} top={5} color="#4088dc" />
    <Curve data={LOWER} top={5} color="#4088dc" />
    <Curve data={TREND} top={5} color="#d01c1c" />
    <text x="5" y="283" fill="#fff" fontSize="9">#123762772 sell</text>
  </Plot>
);

const MacdChart = () => (
  <Plot>
    {HISTOGRAM.map((v, i) => (
      <rect key={i} x={i * 8 - 1} width="3" y={Math.min(v, 297) / 3 - 34} height={Math.abs(v - 297) / 3} fill="#2f4f4f" />
    ))}
    <Curve data={delay(42)} top={34} color="#0000c8" />
    <Curve data={delay(28)} top={34} color="#0000e0" />
    <Curve data={delay(14)} top={34} color="#0008f0" />
    <Curve data={blend(0.24)} top={34} color="#d81010" />
    <Curve data={blend(0.12)} top={34} color="#f01810" />
    <Curve data={LEAD} top={34} color="#f4a040" />
    <Curve data={LAG} top={34} color="#3f90e8" />
  </Plot>
);

/* ---------- content ---------- */

const MENUS: [string, string][] = [
  ["文件", "F"], ["显示", "V"], ["插入", "I"], ["图表", "C"], ["工具", "T"], ["窗口", "W"], ["帮助", "H"],
];

const QUOTES: [string, string, string, boolean][] = [
  ["EURUSDm", "1.2359", "1.2361", true],
  ["USDJPYm", "92.30", "92.33", false],
  ["GBPUSDm", "1.5297", "1.5301", false],
  ["USDCHFm", "1.1594", "1.1598", false],
  ["USDCADm", "1.2918", "1.2923", false],
  ["AUDUSDm", "0.6059", "0.6064", true],
  ["NZDUSDm", "0.5381", "0.5386", true],
  ["EURGBPm", "0.8076", "0.8079", false],
  ["EURJPYm", "114.08", "114.12", true],
  ["EURCHFm", "1.4330", "1.4335", true],
  ["AUDJPYm", "55.89", "56.01", true],
];

const TREE = [
  { icon: "accounts", text: "账户", box: "-" },
  { icon: "user", text: "2154657: amass", depth: 2 },
  { icon: "user", text: "2154655: amass", depth: 2, last: true },
  { icon: "formula", text: "技术指标", box: "+" },
  { icon: "advisor", text: "智能交易系统", box: "+" },
  { icon: "custom", text: "自定义指标", box: "+" },
  { icon: "script", text: "脚本", box: "+", last: true },
];

const Gutter = ({ depth, box, last }: { depth?: number; box?: string; last?: boolean }) => (
  <svg width={depth ? 45 : 25} height="18">
    <g stroke="#a0a0a0" strokeDasharray="1 1" fill="none">
      <path d={depth || !last ? "M12.500 0v18" : "M12.500 0v9"} />
      {depth ? <path d={last ? "M34.500 0v9h10" : "M34.500 0v18M34.500 9.500h10"} /> : <path d="M16 9.500h8" />}
    </g>
    {box && (
      <>
        <rect x="8.500" y="5.500" width="8" height="8" fill="#f4f3ee" stroke="#7b9ebd" />
        <path d={box === "+" ? "M10 9.500h5M12.500 7v5" : "M10 9.500h5"} stroke="#000" />
      </>
    )}
  </svg>
);

const PRICES = ["2.1370", "2.0710", "2.0050", "1.9410", "1.8750", "1.8090", "1.7450", "1.6790", "1.6130", "1.5490", "1.4830", "1.4170", "1.3530"];
const DATES = [
  "1 Dec 1998", "1 Aug 1999", "1 Apr 2000", "1 Dec 2000", "1 Aug 2001", "1 Apr 2002", "1 Dec 2002", "1 Aug 2003",
  "1 Apr 2004", "1 Dec 2004", "1 Aug 2005", "1 Apr 2006", "1 Dec 2006", "1 Aug 2007", "1 Apr 2008",
];
const GAUGES = [
  { name: "M1", value: "71.53", width: 84, color: "#f01818" },
  { name: "M5", value: "4.250", width: 88, color: "#9acd32", up: true },
  { name: "M15", value: "0.000", width: 103, color: "#c71585" },
  { name: "M30", value: "0.000", width: 103, color: "#c71585" },
  { name: "H1", value: "0.000", width: 82, color: "#c71585" },
  { name: "H4", value: "22.63", width: 85, color: "#f01818" },
];
const CHART_TABS = [
  "EURUSDm,M30", "USDJPYm,M1", "GBPUSDm,Monthly", "USDCHFm,M30", "USDCADm,M1", "AUDUSDm,M1", "NZDUSDm,M1",
  "EURGBPm,M1", "EURJPYm,M1", "EURCHFm,M1", "AUDJPYm,H4",
];

const COLUMNS: [string, number | undefined][] = [
  ["定单  ⁄", 140], ["时间", 238], ["类型", 94], ["手数", 78], ["商品", 96], ["价位", 108], ["止损", 108],
  ["获利", 108], ["价位", 108], ["佣金", 108], ["利息", 108], ["获利", undefined],
];
const TRADES = [
  ["123759243", "2008.10.27 05:30", "sell", "8.00", "gbpusdm", "1.5626", "1.5387", "1.5000", "1.5303", "0.00", "0.00", "323"],
  ["123760891", "2008.10.27 05:40", "sell", "8.00", "eurusdm", "1.2530", "1.2424", "1.1786", "1.2360", "0.00", "0.00", "170"],
  ["123762772", "2008.10.27 05:55", "sell", "8.00", "gbpusdm", "1.5716", "1.5386", "1.5000", "1.5303", "0.00", "0.00", "413"],
];
const STATUS: [string, number][] = [
  ["Default", 165], ["2004.12.01 00:00", 115], ["O: 1.9126", 87], ["H: 1.9549", 86], ["L: 1.9015", 86],
  ["C: 1.9210", 86], ["V: 111558", 86],
];

const Tools = ({ names, pressed = [] }: { names: string[]; pressed?: string[] }) => (
  <>
    {names.map((n) => (
      <ToolButton key={n} aria-label={n} $pressed={pressed.includes(n)}><Icon name={n} /></ToolButton>
    ))}
  </>
);

const DropTool = ({ name, width }: { name: string; width: number }) => (
  <ToolButton aria-label={name} $width={width}><Icon name={name} /><Caret /></ToolButton>
);

const Toolbars = () => (
  <>
    <ToolRow>
      <ToolBand>
        <Grip />
        <DropTool name="newChart" width={36} />
        <DropTool name="profiles" width={34} />
        <ToolSep />
        <Tools names={["market", "target", "favorites", "terminal", "tester"]} pressed={["market", "favorites", "terminal"]} />
        <ToolSep />
        <ToolButton $width={64}><Icon name="newOrder" /><ToolLabel>新定单</ToolLabel></ToolButton>
        <Tools names={["metaEditor"]} />
        <ToolButton $width={76}><Icon name="experts" /><ToolLabel>智能交易</ToolLabel></ToolButton>
      </ToolBand>
      <ToolBand>
        <Grip />
        <Tools names={["bars", "candles", "line"]} pressed={["candles"]} />
        <ToolSep />
        <Tools names={["zoomIn", "zoomOut"]} />
        <ToolSep />
        <Tools names={["autoScroll", "shift"]} pressed={["autoScroll", "shift"]} />
        <ToolSep />
        <DropTool name="indicators" width={34} />
        <DropTool name="periods" width={34} />
        <DropTool name="templates" width={34} />
      </ToolBand>
    </ToolRow>
    <ToolRow>
      <ToolBand>
        <Grip />
        <Tools names={["cursor", "cross"]} pressed={["cursor"]} />
        <ToolSep />
        <Tools names={["vline", "hline", "trend"]} />
        <ToolButton aria-label="channel">
          <svg width="18" height="18">{ICONS.channel}<text x="12" y="17" fontSize="8" fill="#333">E</text></svg>
        </ToolButton>
        <ToolButton aria-label="fibo">
          <svg width="18" height="18">{ICONS.fibo}<text x="12" y="17" fontSize="8" fill="#333">F</text></svg>
        </ToolButton>
        <ToolButton aria-label="text">
          <svg width="18" height="18"><text x="5" y="14" fontSize="13" fontWeight="bold" fill="#555">A</text></svg>
        </ToolButton>
        <ToolButton aria-label="label">
          <svg width="18" height="18">{ICONS.label}<text x="6" y="14" fontSize="12" fontWeight="bold" fill="#555">T</text></svg>
        </ToolButton>
        <DropTool name="arrows" width={32} />
        <ToolSep />
        <Grip />
        {["M1", "M5", "M15", "M30", "H1", "H4", "D1", "W1", "MN"].map((t) => (
          <ToolButton key={t} $pressed={t === "MN"}>{t}</ToolButton>
        ))}
      </ToolBand>
    </ToolRow>
  </>
);

const Sidebar = () => (
  <Side>
    <SidePanel>
      <PanelCaption>
        <PanelTitle>市场报价: 09:17:14</PanelTitle>
        <CloseX aria-label="关闭"><Cross /></CloseX>
      </PanelCaption>
      <PanelBody $height={266}>
        <Quotes>
          <colgroup><col width={76} /><col width={51} /><col /></colgroup>
          <thead><tr><th>商品</th><th>卖价</th><th>买价</th></tr></thead>
          <tbody>
            {QUOTES.map(([name, bid, ask, up]) => (
              <tr key={name}>
                <td><Symbol><QuoteArrow up={up} />{name}</Symbol></td>
                <Price $up={up}>{bid}</Price>
                <Price $up={up}>{ask}</Price>
              </tr>
            ))}
          </tbody>
        </Quotes>
      </PanelBody>
      <Tabs><Tab $active>商品列表</Tab><Tab>即时图</Tab></Tabs>
    </SidePanel>
    <SidePanel $grow>
      <PanelCaption>
        <PanelTitle>导航</PanelTitle>
        <CloseX aria-label="关闭"><Cross /></CloseX>
      </PanelCaption>
      <PanelBody>
        <ul>
          <TreeRow><svg width="5" height="18" /><Icon name="charts" size={16} /><TreeText>Interbank FX Trader 4</TreeText></TreeRow>
          {TREE.map((n) => (
            <TreeRow key={n.text}>
              <Gutter depth={n.depth} box={n.box} last={n.last} />
              <Icon name={n.icon} size={18} />
              <TreeText><Mixed text={n.text} /></TreeText>
            </TreeRow>
          ))}
        </ul>
      </PanelBody>
      <Tabs><Tab $active>常用</Tab><Tab>收藏夹</Tab></Tabs>
    </SidePanel>
  </Side>
);

const Charts = () => (
  <ChartColumn>
    <ChartWindow>
      <PaneRow>
        <Pane>
          <PriceChart />
          <PaneHeading>{"GBPUSDm,Monthly   1.7828 1.7872 1.5263 1.5297"}<br />趋势线预警系统: 声音已打开</PaneHeading>
          <Ranges>
            <div><Mixed text="日波幅 593" size={15} /></div>
            <div><Mixed text="距高点 573" size={15} /></div>
            <div><Mixed text="距低点 20" size={15} /></div>
          </Ranges>
          <Tooltip>{"=x=ZigZag_Channels\nTime: 2004.12.01 00:00\nLower band: 1.9549"}</Tooltip>
        </Pane>
        <Axis $rows="repeat(12, 32px) 12px">
          {PRICES.map((p) => <PriceLabel key={p}>{p}</PriceLabel>)}
          <PriceTag>1.5297</PriceTag>
        </Axis>
      </PaneRow>
      <PaneRow $height={31}>
        <Pane>
          <Readout>
            <Small $width={60}>DIGISTOCH</Small>
            {GAUGES.map((g) => (
              <Gauge key={g.name} $width={g.width} $color={g.color}><b>{g.name}</b><Chevron up={g.up} />{g.value}</Gauge>
            ))}
            <Small $width={56} $end $color="#c8c8c8">LEGEND</Small>
            <Legend>
              <LegendItem $color="#20e820">TREND UP</LegendItem>
              <LegendItem $color="#4668d8">OVERBOUGHT</LegendItem>
              <LegendItem $color="#9acd32">BULLISH START</LegendItem>
              <LegendItem $color="#e81818">TREND DN</LegendItem>
              <LegendItem $color="#c71585">OVERSOLD</LegendItem>
              <LegendItem $color="#ff6347">BEARISH START</LegendItem>
            </Legend>
          </Readout>
        </Pane>
        <Axis $rows="16px 14px"><AxisLabel>-9000000</AxisLabel><AxisLabel>90000000</AxisLabel></Axis>
      </PaneRow>
      <PaneRow $height={141}>
        <Pane>
          <MacdChart />
          <Readout>
            <Small $width={295} $narrow>GMACD2 -0.0670 -0.0692 -0.0022 -0.0833 -0.0111 -0.1005 -0.0220</Small>
            <Small $width={37} $color="#c8c8c8">SIGNAL</Small>
            <Tint $width={18} $color="#20e820">M1</Tint>
            <Tint $width={19} $color="#e81818">M5</Tint>
            <Tint $width={83} $color="#ffa500" $size={16}>SIDEWAY</Tint>
            <Small $width={62} $color="#c8c8c8">MAIN TREND</Small>
            <Tint $width={99} $color="#e81818"><span>M15</span><span>M30</span><span>H1</span><span>H4</span></Tint>
            <Tint $width={83} $color="#e81818" $size={16}>TREND/DN</Tint>
            <Small $color="#ffff40">STRONG</Small>
          </Readout>
        </Pane>
        <Axis $rows="59px 67px 14px"><AxisLabel>0.096</AxisLabel><AxisLabel>0.00</AxisLabel><AxisLabel>-0.1099</AxisLabel></Axis>
      </PaneRow>
      <DateAxis>{DATES.map((d) => <DateLabel key={d}>{d}</DateLabel>)}</DateAxis>
    </ChartWindow>
    <ChartTabs>
      <Tabs>
        {CHART_TABS.map((t) => <Tab key={t} $latin $active={t === "GBPUSDm,Monthly"}>{t}</Tab>)}
      </Tabs>
      <Scrollers>
        <svg width="4" height="7"><path d="M4 0v7L0 3.500z" fill="#aaa797" /></svg>
        <svg width="4" height="7"><path d="M0 0v7l4-3.500z" fill="#aaa797" /></svg>
      </Scrollers>
    </ChartTabs>
  </ChartColumn>
);

const TerminalPanel = () => (
  <Terminal>
    <Strip>
      <CloseX aria-label="关闭"><Cross /></CloseX>
      <StripTitle>终端</StripTitle>
    </Strip>
    <TerminalBody>
      <TradeSheet>
        <Trades>
          <colgroup>{COLUMNS.map(([, w], i) => <col key={i} width={w} />)}</colgroup>
          <thead><tr>{COLUMNS.map(([name], i) => <th key={i}>{name}</th>)}</tr></thead>
          <tbody>
            {TRADES.map((row, r) => (
              <TradeLine key={row[0]} $selected={r === 1}>
                {row.map((cell, c) => (
                  <td key={c}>{c === 0 ? <IconText><Icon name="order" size={16} />{cell}</IconText> : cell}</td>
                ))}
              </TradeLine>
            ))}
            <Summary>
              <SummaryCell colSpan={11}>
                <IconText>
                  <Icon name="balance" size={16} />
                  <span><Mixed size={13} text="余额: 3 409.70  净值: 10 657.70  已用保证金: 600.00  可用保证金: 10 057.70  保证金比例: 1776.28%" /></span>
                </IconText>
              </SummaryCell>
              <SummaryCell>7 248.00</SummaryCell>
            </Summary>
          </tbody>
        </Trades>
      </TradeSheet>
      <Tabs $inset={3}>
        {["交易", "账户历史", "新闻", "警报", "邮箱", "智能交易", "日志"].map((t, i) => <Tab key={t} $active={i === 0}>{t}</Tab>)}
      </Tabs>
    </TerminalBody>
  </Terminal>
);

const Traffic = () => (
  <svg width="24" height="12">
    {[0, 1, 2, 3, 4, 5, 6, 7].map((i) => (
      <g key={i}>
        <rect x={i * 3} y="0" width="2" height={9 - i} fill="#5a8a1c" />
        <rect x={i * 3} y={10 - i} width="2" height={2 + i} fill="#9c2a14" />
      </g>
    ))}
  </svg>
);

export default function App() {
  return (
    <Desktop>
      <GlobalStyle />
      <TitleBar>
        <Icon name="app" size={16} />
        <TitleText><Mixed size={14} text="2154657: Interbank FX Trader 4 - 模拟帐户 - [GBPUSDm,Monthly]" /></TitleText>
        <CaptionButtons>
          <CaptionButton aria-label="最小化"><svg width="13" height="13"><path d="M2 10h6" stroke="#fff" strokeWidth="3" /></svg></CaptionButton>
          <CaptionButton aria-label="最大化">
            <svg width="13" height="13"><path d="M1.500 1.500h10v10h-10zM1 2.500h11" fill="none" stroke="#fff" strokeWidth="1.500" /></svg>
          </CaptionButton>
          <CaptionButton aria-label="关闭" $close><svg width="13" height="13"><path d="M2 2l9 9M11 2l-9 9" stroke="#fff" strokeWidth="2" /></svg></CaptionButton>
        </CaptionButtons>
      </TitleBar>
      <MenuBar>
        <Icon name="charts" size={15} />
        <MenuItems>
          {MENUS.map(([name, key]) => <MenuItem key={key}><Han $size={13}>{name}</Han>(<u>{key}</u>)</MenuItem>)}
        </MenuItems>
        <MdiButton aria-label="最小化"><svg width="10" height="10"><path d="M2 8h6" stroke="#555" strokeWidth="2" /></svg></MdiButton>
        <MdiButton aria-label="还原">
          <svg width="10" height="10"><path d="M3 2h6v4M1 5h6v4H1z" fill="none" stroke="#555" strokeWidth="1.500" /></svg>
        </MdiButton>
        <MdiButton aria-label="关闭"><svg width="10" height="10"><path d="M2 2l6 6M8 2L2 8" stroke="#555" strokeWidth="2" /></svg></MdiButton>
      </MenuBar>
      <Toolbars />
      <Work>
        <Sidebar />
        <Charts />
      </Work>
      <TerminalPanel />
      <StatusBar>
        <StatusCell><span><Mixed size={11} text="寻求帮助,请按F1键" /></span></StatusCell>
        {STATUS.map(([text, width]) => <StatusCell key={text} $width={width}>{text}</StatusCell>)}
        <StatusCell $width={162}>
          <Traffic />
          <TrafficText>1389/9 kb</TrafficText>
          <svg width="14" height="14"><path d="M0 14L14 0M4 14L14 4M8 14l6-6M12 14l2-2" stroke="#a5a294" strokeWidth="1.500" /></svg>
        </StatusCell>
      </StatusBar>
      <TaskBar>
        <StartButton><Icon name="windows" size={22} />开始</StartButton>
        <QuickLaunch>
          <Icon name="ie" size={16} /><Icon name="browser" size={16} /><Icon name="desktop" size={16} />
          <svg width="8" height="16"><path d="M1 1l2.500 2.500L1 6M4.500 1L7 3.500 4.500 6" fill="none" stroke="#fff" /></svg>
        </QuickLaunch>
        <TaskButton $active><Icon name="app" size={14} /><span>2154657: Interba...</span></TaskButton>
        <TaskButton><Icon name="browser" size={16} /><span><Mixed text="主 论 坛 - 外汇..." /></span></TaskButton>
        <TrayLead>
          <svg width="16" height="13">
            <path d="M3 3q1-2 5-1t6-2" fill="none" stroke="#111" />
            <rect x=".5" y="4.500" width="15" height="8" fill="#f4f4ea" stroke="#111" />
            <path d="M2 7h12M2 9h12M4 11h8" stroke="#111" strokeDasharray="1 1" />
          </svg>
        </TrayLead>
        <Tray>
          <TrayToggle aria-label="显示图标"><svg width="8" height="8"><path d="M6 0L2 4l4 4" fill="none" stroke="#fff" strokeWidth="1.800" /></svg></TrayToggle>
          <Icon name="network" size={16} />
          <Clock><Mixed text="下午 05:17" /></Clock>
        </Tray>
      </TaskBar>
    </Desktop>
  );
}
